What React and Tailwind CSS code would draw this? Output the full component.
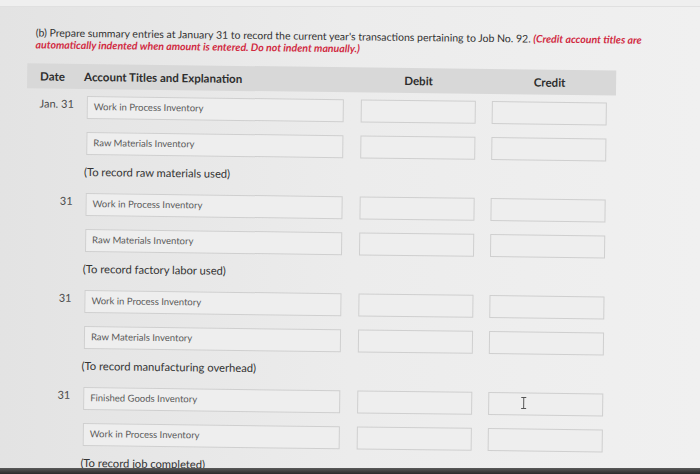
import React from "react";

const FONT = { fontFamily: "Lato, 'Open Sans', 'Liberation Sans', sans-serif" };

function Field({ text, wide }) {
  return (
    <div
      className={
        (wide ? "w-[257px] pl-[6px] " : "w-[115px] ") +
        "h-[23px] border border-[#cfcfcf] bg-[#eeeeee] flex items-center text-[9.5px] text-[#5a5a5a]"
      }
    >
      {text}
    </div>
  );
}

function Row({ date, account, cursor }) {
  return (
    <div className="flex items-start">
      <div className="w-[52px] pr-[5px] text-right text-[11px] leading-[16px] text-[#4a4a4a]">
        {date}
      </div>
      <div className="ml-[8px]">
        <Field text={account} wide />
      </div>
      <div className="ml-[17px]">
        <Field />
      </div>
      <div className="ml-[16px] relative">
        <Field />
        {cursor && (
          <svg
            className="absolute left-[32px] top-[4px]"
            width="7"
            height="13"
            viewBox="0 0 7 13"
          >
            <path d="M1 1h5M1 12h5M3.5 1v11" stroke="#555" strokeWidth="1" fill="none" />
          </svg>
        )}
      </div>
    </div>
  );
}

function Block({ date, debit, credit, note, cursor }) {
  return (
    <div className="flex flex-col">
      <Row date={date} account={debit} cursor={cursor} />
      <div className="mt-[13px]">
        <Row account={credit} />
      </div>
      <div className="mt-[9px] ml-[58px] h-[16px] leading-[16px] text-[11.2px] text-[#333333]">
        {note}
      </div>
      <div className="h-[13px]" />
    </div>
  );
}

export default function App() {
  return (
    <div
      className="w-[700px] h-[474px] overflow-hidden flex flex-col bg-gradient-to-r from-[#e3e3e3] via-[#ececec] to-[#f0f0f0]"
      style={FONT}
    >
      <div className="h-[7px] bg-[#efefef] border-b border-[#e0e0e0]" />
      <div className="flex-1 overflow-hidden">
        <div className="origin-top-left rotate-[0.7deg]">
          <p className="pt-[19px] pl-[36px] pr-[40px] text-[10.5px] leading-[12px] text-[#333333]">
            (b) Prepare summary entries at January 31 to record the current year's transactions pertaining to Job No. 92.{" "}
            <span className="italic font-bold text-[#d12a42]">
              (Credit account titles are automatically indented when amount is entered. Do not indent manually.)
            </span>
          </p>
          <div className="ml-[28px] w-[589px] mt-[13px]">
            <div className="h-[25px] bg-[#d8d8d8] flex items-center font-bold text-[11.5px] text-[#2e2e2e]">
              <div className="w-[57px] pl-[13px]">Date</div>
              <div className="w-[277px]">Account Titles and Explanation</div>
              <div className="w-[115px] text-center">Debit</div>
              <div className="w-[115px] ml-[16px] text-center">Credit</div>
            </div>
            <div className="mt-[7px]">
              <Block
                date="Jan. 31"
                debit="Work in Process Inventory"
                credit="Raw Materials Inventory"
                note="(To record raw materials used)"
              />
              <Block
                date="31"
                debit="Work in Process Inventory"
                credit="Raw Materials Inventory"
                note="(To record factory labor used)"
              />
              <Block
                date="31"
                debit="Work in Process Inventory"
                credit="Raw Materials Inventory"
                note="(To record manufacturing overhead)"
              />
              <Block
                date="31"
                debit="Finished Goods Inventory"
                credit="Work in Process Inventory"
                note="(To record job completed)"
                cursor
              />
            </div>
          </div>
        </div>
      </div>
      <div className="h-[6px] bg-gradient-to-b from-[#5a5a5a] to-[#2a2a2a]" />
    </div>
  );
}
